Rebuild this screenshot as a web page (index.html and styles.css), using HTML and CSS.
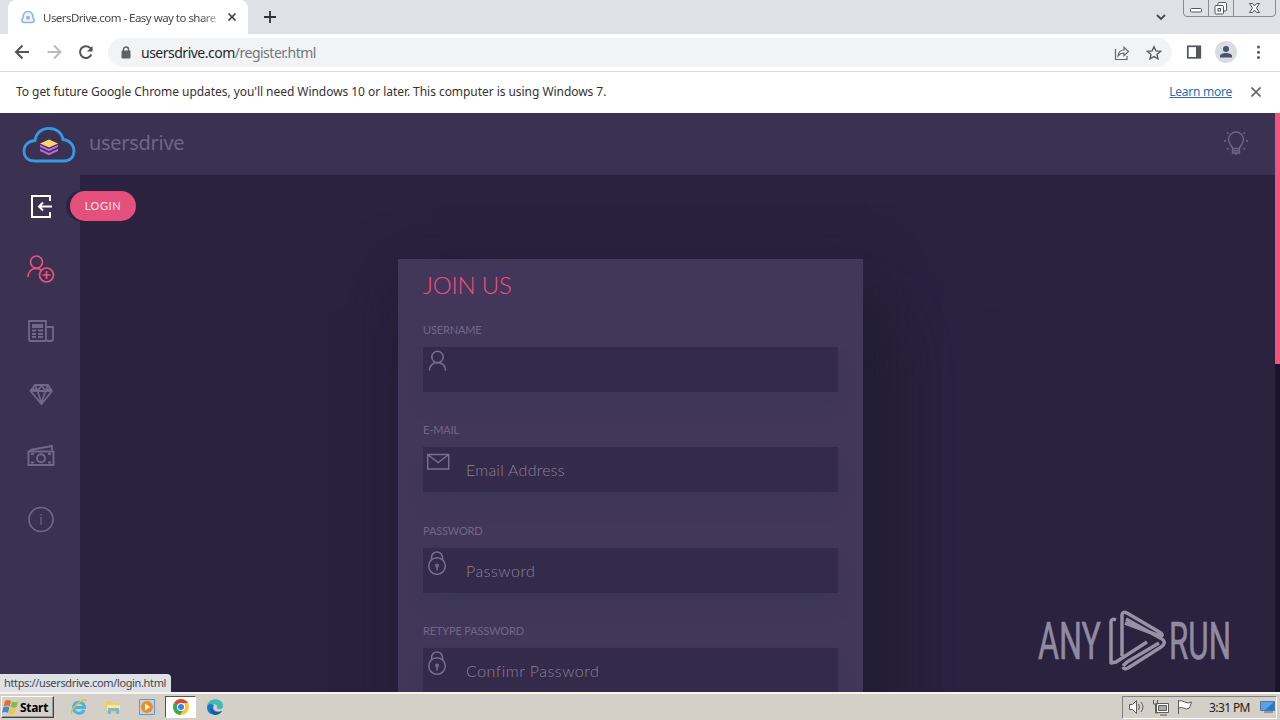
FILE: index.html
```html
<!DOCTYPE html>
<html lang="en">
<head>
<meta charset="utf-8">
<title>UsersDrive.com - Easy way to share</title>
<link rel="stylesheet" href="styles.css">
</head>
<body>
<div class="desktop">
  <div class="tabstrip">
    <div class="tab">
      <svg class="favicon" width="14" height="14" viewBox="0 0 14 14"><path d="M3 12.5a2.3 2.3 0 0 1-1-4.3C1.7 4 4 1.5 7 1.5s5.3 2.500 5 6.700a2.300 2.300 0 0 1-1 4.300z" fill="#eaf5fd" stroke="#84b9e6" stroke-width="1.500"/><circle cx="7" cy="7.800" r="2" fill="#c99fcb"/></svg>
      <span class="tab-title">UsersDrive.com - Easy way to share</span>
      <svg class="tab-close" width="10" height="10" viewBox="0 0 10 10"><path d="M1.500 1.500l7 7m0-7l-7 7" stroke="#3c4043" stroke-width="1.700"/></svg>
    </div>
    <svg class="new-tab" width="12" height="12" viewBox="0 0 12 12"><path d="M6 0v12M0 6h12" stroke="#303438" stroke-width="1.800"/></svg>
    <svg class="chevron" width="12" height="8" viewBox="0 0 12 8"><path d="M2 2l4 4 4-4" fill="none" stroke="#45494d" stroke-width="1.800"/></svg>
    <svg class="caption" width="94" height="17" viewBox="0 0 94 17"><path d="M.5 0v13q0 3.500 3.500 3.500h85q3.500 0 3.500-3.500V0M25.500 0v16.500M50.500 0v16.500" fill="none" stroke="#898c91"/><g fill="#fff" stroke="#54585d"><rect x="7.500" y="8.500" width="11" height="3.500" rx="1"/><rect x="35" y="2.500" width="8.500" height="8.500" rx="1"/><rect x="32" y="5.500" width="8.500" height="8.500" rx="1"/><rect x="35" y="8.500" width="2.500" height="2.500"/><path d="M66.500 3.500h3l2 2.500 2-2.500h3L73.500 8l3 4.500h-3l-2-2.500-2 2.500h-3l3-4.500z"/></g></svg>
  </div>
  <div class="toolbar">
    <svg class="nav" width="96" height="37" viewBox="0 0 96 37" fill="none" stroke-width="2"><path d="M29 18H16m6.500-6.500L16 18l6.500 6.500" stroke="#505357"/><path d="M47.500 18h13M54 11.500l6.500 6.500-6.500 6.500" stroke="#b9bcbf"/><path d="M91.300 20.500a5.900 5.900 0 1 1-1.200-6.600l2 2" stroke="#505357"/><path d="M92.500 12v5.500H87z" fill="#505357"/></svg>
    <div class="omnibox">
      <svg width="10" height="13" viewBox="0 0 10 13"><rect x=".5" y="4.500" width="9" height="8" rx="1" fill="#5f6368"/><path d="M2.500 5V3.500a2.500 2.500 0 0 1 5 0V5" fill="none" stroke="#5f6368" stroke-width="1.500"/></svg>
      <span class="url"><span class="host">usersdrive.com</span>/register.html</span>
      <svg class="share" width="16" height="16" viewBox="0 0 16 16" fill="none" stroke="#63676b" stroke-width="1.200"><path d="M1.500 4v10.500h11.500V11"/><path d="M4 11c.5-4 2.500-6 6-6V2.300l4.500 4.200-4.500 4.200V8C7.500 8 5.500 9 4 11z"/></svg>
      <svg class="star" width="16" height="16" viewBox="0 0 16 16"><path d="M8 1.700l1.900 4.200 4.500.5-3.400 3 1 4.500-4-2.300-4 2.300 1-4.500-3.400-3 4.500-.5z" fill="none" stroke="#5b5f63" stroke-width="1.400"/></svg>
    </div>
    <svg class="tools" width="108" height="37" viewBox="0 0 108 37"><rect x="15.800" y="12.300" width="12.500" height="11.500" fill="none" stroke="#54585c" stroke-width="1.700"/><path d="M24 12h5v12h-5z" fill="#54585c"/><circle cx="54" cy="18" r="11" fill="#d9dde3"/><circle cx="54" cy="15" r="3" fill="#48536e"/><path d="M48 23.500v-1.500c0-4 12-4 12 0v1.500z" fill="#48536e"/><g fill="#54585c"><circle cx="86.500" cy="13" r="1.500"/><circle cx="86.500" cy="18.200" r="1.500"/><circle cx="86.500" cy="23.400" r="1.500"/></g></svg>
  </div>
  <div class="infobar">
    <span class="info-text">To get future Google Chrome updates, you'll need Windows 10 or later. This computer is using Windows 7.</span>
    <span class="learn">Learn more</span>
    <svg width="12" height="12" viewBox="0 0 12 12"><path d="M1.500 1.500l9 9m0-9l-9 9" stroke="#5b5f63" stroke-width="1.700"/></svg>
  </div>

  <div class="page">
    <header class="site-header">
      <svg class="logo" width="54" height="38" viewBox="0 0 54 38"><path d="M12 35C5.500 35 2 30.500 2 25.500 2 19 6.500 15 13 14.500 14 7 19.500 2.300 27 2.300s13 4.700 14 11.200c6.500.5 11 5.500 11 11.500 0 6-4 10-10 10z" fill="none" stroke="#3699e4" stroke-width="2.800"/><path d="M18 22.700l9 4.200 9-4.200v2.200l-9 4.300-9-4.300zm0-4l9 4.200 9-4.200v2.200l-9 4.300-9-4.300z" fill="#bd68e3"/><path d="M18 17.500l9-4 9 4-9 4z" fill="#ffd36d"/></svg>
      <span class="brand">usersdrive</span>
      <svg class="bulb" width="26" height="26" viewBox="0 0 26 26" fill="none" stroke="#706684" stroke-width="1.400"><path d="M9.500 18.500c0-3-4-4.500-4-9a7.500 7.500 0 0 1 15 0c0 4.500-4 6-4 9zm0 0v4.500h7v-4.500M9.500 20.700h7M12 24h2M4 2.500l1.500 1.500m16.500-1.500L20.500 4M1 11h2m20 0h2M4 19.500L5.500 18m16.500 1.500L20.500 18"/></svg>
    </header>
    <div class="columns">
      <nav class="sidebar">
        <div class="item"><svg width="28" height="28" viewBox="0 0 28 28" fill="none" stroke="#fff" stroke-width="2"><path d="M23 9V4H5v21h18v-5M25 14.500H12m4-4l-4 4 4 4"/></svg></div>
        <div class="item"><svg width="28" height="28" viewBox="0 0 28 28" fill="none" stroke="#ef5080" stroke-width="1.700"><circle cx="9.500" cy="7" r="6"/><path d="M1 22c0-5 3.500-8.700 8-8.700 2 0 3.500.5 5 1.500"/><circle cx="19.500" cy="20" r="7"/><path d="M15.500 20h8m-4-4v8"/></svg></div>
        <div class="item"><svg width="28" height="28" viewBox="0 0 28 28" fill="none" stroke="#716788" stroke-width="1.800"><path d="M19 24H3.500Q2 24 2 22.500V4h17v18q0 2 2 2h3q2 0 2-2V10h-7"/><path d="M5 9h11" stroke-width="4"/><path d="M5 13.500h4m2 0h5M5 17h4m2 0h5M5 20h4m2 0h5"/></svg></div>
        <div class="item"><svg width="28" height="28" viewBox="0 0 28 28" fill="none" stroke="#716788" stroke-width="1.800"><path d="M8 5h13l4 6L14.500 24 3.500 11zM3 11h22.500M8 5l2.500 6 4 12 4-12L21 5M10.500 11l4-5.500 4 5.500M5.500 8l5 3m8 0l5-3"/></svg></div>
        <div class="item"><svg width="28" height="28" viewBox="0 0 28 28" fill="none" stroke="#716788" stroke-width="1.900"><path d="M1.500 9.500h25V23h-25zM3 8l22-4v4"/><circle cx="14" cy="16.200" r="4"/><path d="M4 12h3m14 0h3M4 20.500h3m14 0h3"/></svg></div>
        <div class="item"><svg width="28" height="28" viewBox="0 0 28 28" fill="none" stroke="#716788" stroke-width="1.700"><circle cx="14" cy="14.500" r="12"/><path d="M14 12v8m0-11v1.500" stroke-width="1.200"/></svg></div>
      </nav>
      <div class="tooltip">LOGIN</div>
      <main class="content">
        <form class="card">
          <h1>JOIN US</h1>
          <label>USERNAME</label>
          <div class="field"><svg class="person" width="22" height="25" viewBox="0 0 22 25"><circle cx="10.500" cy="8" r="5.700"/><path d="M2.500 21.500c0-5 3.500-8 8-8s8 3 8 8"/></svg></div>
          <label>E-MAIL</label>
          <div class="field"><svg width="24" height="25" viewBox="0 0 24 25"><path d="M.7 7.500h21v14.500H.7zl10.500 8 10.500-8"/></svg><span class="email">Email Address</span></div>
          <label>PASSWORD</label>
          <div class="field"><svg width="22" height="27" viewBox="0 0 22 27"><circle cx="10" cy="18" r="8.300"/><path d="M4.500 11.500V9.500a5.500 5.500 0 0 1 11 0v2"/><circle cx="10" cy="17.500" r="1.200"/><path d="M10 18.500v4"/></svg><span>Password</span></div>
          <label class="retype">RETYPE PASSWORD</label>
          <div class="field"><svg width="22" height="27" viewBox="0 0 22 27"><circle cx="10" cy="18" r="8.300"/><path d="M4.500 11.500V9.500a5.500 5.500 0 0 1 11 0v2"/><circle cx="10" cy="17.500" r="1.200"/><path d="M10 18.500v4"/></svg><span class="confirm">Confimr Password</span></div>
        </form>
      </main>
    </div>
    <div class="scrollbar"></div>
    <svg class="watermark" width="200" height="66" viewBox="0 0 200 66"><g fill="#918ba1"><text x="2" y="50.500" textLength="63" lengthAdjust="spacingAndGlyphs">ANY</text><text x="133" y="50.500" textLength="62" lengthAdjust="spacingAndGlyphs">RUN</text></g><path d="M80 12q-5-2-5 2v41l5-1 31-20M86 48V7q0-4 5-2l34 20q3 3-1 3L89 15M87 59q1 3 5 1l33-21q6-4 1-8L90 11M87 58l4-4 32-19" fill="none" stroke="#9691a5" stroke-width="3.500" stroke-linejoin="round"/></svg>
    <div class="status">https://usersdrive.com/login.html</div>
  </div>

  <div class="taskbar">
    <div class="start"><svg width="18" height="18" viewBox="0 0 18 18"><path d="M3 3q3-2 6 0L7.500 8.500q-3-2-6 0z" fill="#e96a32"/><path d="M10 3.500q3 1.500 6 0l-1.500 5.500q-3 1.500-6 0z" fill="#83bd42"/><path d="M1.300 9.500q3-2 6 0L6 15q-3-2-6 0z" fill="#3b8ed6"/><path d="M8 10q3 1.500 6 0l-1.500 5.500q-3 1.500-6 0z" fill="#f4c837"/></svg><span>Start</span></div>
    <div class="apps">
      <svg width="18" height="18" viewBox="0 0 18 18"><path d="M14 12a5.500 5.500 0 1 1 .5-2.500H5" fill="none" stroke="#48b4e6" stroke-width="3"/><path d="M2 16C-1 12 12 0 16.500 2.500" fill="none" stroke="#e6bd39" stroke-width="1.500"/></svg>
      <svg width="18" height="18" viewBox="0 0 18 18"><path d="M2 3h5l1 2h8v10H2z" fill="#eccc65"/><path d="M3 7h13v5H3z" fill="#f8e9a6"/><path d="M4 10h11v6h-3v-3H7v3H4z" fill="#78bad5"/></svg>
      <svg width="18" height="18" viewBox="0 0 18 18"><path d="M1.500 1.500h15v15h-15z" fill="#b9d7ea" stroke="#6199c3"/><circle cx="9" cy="9" r="6" fill="#f28b1d"/><path d="M7 5.500l5 3.500-5 3.500z" fill="#fff"/></svg>
      <div class="active"><svg width="18" height="18" viewBox="0 0 18 18"><circle cx="9" cy="9" r="8" fill="#f7ca35"/><path d="M9 9L2.100 5A8 8 0 0 1 15.900 5H9z" fill="#df4937"/><path d="M2.100 5A8 8 0 0 0 8 16.900L12 11 9 9z" fill="#3ba757"/><circle cx="9" cy="9" r="4" fill="#fff"/><circle cx="9" cy="9" r="3" fill="#427fea"/></svg></div>
      <svg width="18" height="18" viewBox="0 0 18 18"><path d="M1 9C1-1 17-1 17 8c0 4-5 4-6 2 1-2-1-4-4-4-3 0-5 1-6 3z" fill="#3fbcb4"/><path d="M1 9c1-3 4-4 7-2-3 5 2 8 8 6-3 5-15 6-15-4z" fill="#1479c6"/><path d="M7 8c-3 5 2 8 9 5-2 3-5 4-7 4-5-2-5-6-2-9z" fill="#1a58a5"/></svg>
    </div>
    <div class="tray">
      <svg width="70" height="20" viewBox="0 0 70 20" fill="#fff" stroke="#5d5c59"><path d="M2.500 7.500h3l4-4v13l-4-4h-3z"/><path d="M11.500 7q2 3 0 6m2.500-8q4 5 0 10" fill="none"/><path d="M29.500 6.500h12v9h-12z"/><path d="M31.500 8.500h8v5h-8z" fill="#aaa"/><path d="M33 18h7M26.500 3v4h4V3m-2 4v9h2" fill="none"/><path d="M51.500 3v14M51.500 4q4-1 6 1 4 2 7 0l-2 6q-3 2-6 0-2-1-5 0z"/></svg>
      <span>3:31 PM</span>
      <svg width="18" height="16" viewBox="0 0 18 16"><path d="M1.500 2.500h14v9h-14z" fill="#2876cf" stroke="#5377a3"/><path d="M2 3h13L6 11H2z" fill="#5ba2e5"/><path d="M5 13h9" stroke="#46627d"/></svg>
    </div>
  </div>
</div>
</body>
</html>
```

FILE: styles.css
```css
* { box-sizing: border-box; }
body { margin: 0; font-family: "Noto Sans", sans-serif; }
svg { display: block; flex: none; }
.desktop { width: 1280px; height: 720px; overflow: hidden; display: flex; flex-direction: column; background: #fff; }
.tabstrip { height: 34px; background: #dee1e6; display: flex; padding-left: 8px; flex: none; }
.tab { width: 240px; background: #fff; border-radius: 8px 8px 0 0; display: flex; align-items: center; padding-left: 13px; }
.tab-title { font-size: 11.500px; letter-spacing: -.53px; color: #45484c; width: 175px; margin: 0 9px 0 8px; white-space: nowrap; -webkit-mask-image: linear-gradient(90deg, #000 90%, rgba(0,0,0,.3)); mask-image: linear-gradient(90deg, #000 90%, rgba(0,0,0,.3)); }
.new-tab { margin: 11px 0 0 16px; }
.chevron { margin: 13px 16px 0 auto; }
.caption { margin-right: 3px; }
.toolbar { height: 38px; border-bottom: 1px solid #dadce0; display: flex; flex: none; }
.nav { margin-right: 12px; }
.omnibox { width: 1064px; height: 29px; margin-top: 4px; border-radius: 15px; background: #f1f3f4; display: flex; align-items: center; padding: 0 10px 0 13px; }
.url { color: #74777a; font-size: 14px; margin-left: 10px; letter-spacing: -.5px; }
.host { color: #25282c; }
.share { margin-left: auto; margin-right: 16px; }
.infobar { height: 41px; display: flex; align-items: center; padding: 0 18px 1px 16px; font-size: 12px; letter-spacing: -.05px; color: #333; flex: none; }
.info-text, .learn { padding-bottom: 2px; }
.learn { margin-left: auto; margin-right: 18px; color: #2b6fae; text-decoration: underline; letter-spacing: -.25px; }
.page { height: 579px; background: #2b2240; position: relative; overflow: hidden; flex: none; }
.site-header { height: 62px; background: #3b3151; display: flex; align-items: center; padding-left: 22px; }
.logo { margin-top: 2px; }
.brand { font-size: 20px; color: #706684; margin-left: 13px; letter-spacing: -.3px; padding-bottom: 3px; }
.bulb { margin: 0 31px 2px auto; }
.columns { height: 517px; display: flex; position: relative; }
.sidebar { width: 80px; background: #3b3151; padding-top: 17px; display: flex; flex-direction: column; gap: 34.600px; flex: none; }
.item { padding-left: 26.500px; }
.tooltip { position: absolute; left: 70px; top: 16px; width: 66px; height: 30px; border-radius: 15px; background: #e44f7b; color: #ffe9f1; font: 11px/30px Lato, sans-serif; letter-spacing: .6px; text-align: center; box-shadow: -3px 0 0 1px rgba(43,34,64,.8); }
.content { flex: 1; padding: 84px 0 0 318px; }
.card { width: 465px; height: 500px; padding: 12px 25px; background: #423659; box-shadow: 0 20px 50px 5px rgba(28,27,46,.5), 35px 50px 70px 0 rgba(28,27,46,.5); }
h1 { font: 300 24px/28px Lato, sans-serif; letter-spacing: -.2px; color: #ef4f80; margin: 0 0 22px; }
label { display: block; font: 11px/18px Lato, sans-serif; letter-spacing: -.15px; color: #716686; margin-bottom: 8px; }
.field { height: 45px; margin-bottom: 29.400px; background: #342a49; display: flex; padding-left: 4px; box-shadow: 0 14px 22px -8px rgba(53,57,82,.8); }
.field svg { fill: none; stroke: #796f8b; stroke-width: 1.500; }
.field .person { margin-top: 2px; }
.field span { font: 300 16px/46px Lato, sans-serif; margin-left: 17px; color: #8b8199; letter-spacing: .5px; }
.field .email { margin-left: 15px; letter-spacing: .25px; }
.scrollbar { position: absolute; right: 0; top: 0; width: 5px; height: 100%; background: linear-gradient(#f5527e 0 251px, #19142a 251px); }
.watermark { position: absolute; left: 1036px; top: 495px; overflow: visible; }
.watermark text { font: 400 51px Roboto, sans-serif; stroke: #918ba1; stroke-width: .6px; }
.status { position: absolute; left: 0; bottom: 0; width: 171px; height: 18px; padding-left: 4px; background: #dee1e6; border-radius: 0 4px 0 0; font-size: 11px; letter-spacing: -.36px; line-height: 18px; color: #44484c; white-space: nowrap; }
.taskbar { height: 28px; border-top: 2px solid #f5f3ef; background: #d4d0c8; display: flex; align-items: center; flex: none; }
.start { width: 53px; height: 22px; margin-left: 1px; display: flex; align-items: center; border: 1px solid; border-color: #fff #45433f #45433f #fff; box-shadow: inset -1px -1px #999; font: bold 12px "Noto Sans", sans-serif; letter-spacing: -.3px; }
.apps { display: flex; align-items: center; padding-left: 17px; gap: 16px; }
.apps > svg, .apps .active { position: relative; left: -1px; }
.apps .active { width: 31px; height: 22px; margin: 0 -6px 0 -7px; padding: 1px 0 0 6px; background: #fff; border: 1px solid; border-color: #55534f #fff #fff #55534f; }
.tray { width: 155px; height: 23px; margin-left: auto; margin-right: 3px; display: flex; align-items: center; border: 1px solid; border-color: #808080 #fff #fff #808080; padding-left: 4px; font-size: 12px; color: #222; }
.tray span { margin: 0 9px 0 12px; white-space: nowrap; letter-spacing: -.6px; }
```
